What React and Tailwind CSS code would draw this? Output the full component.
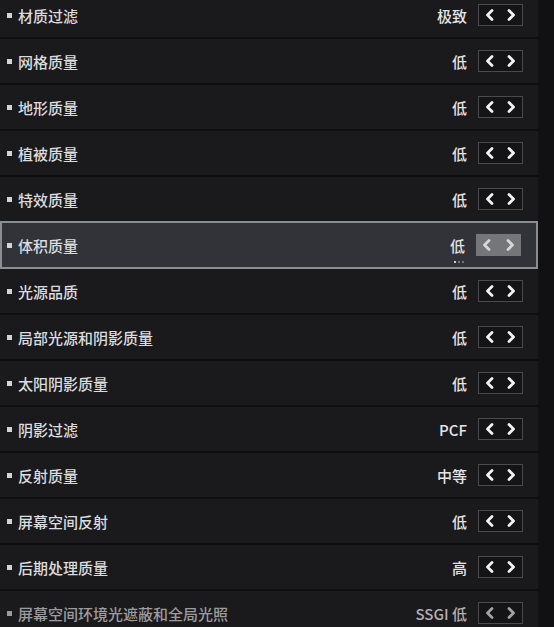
import React from 'react'

const rows = [
    { label: '材质过滤', value: '极致' },
    { label: '网格质量', value: '低' },
    { label: '地形质量', value: '低' },
    { label: '植被质量', value: '低' },
    { label: '特效质量', value: '低' },
    { label: '体积质量', value: '低', active: true },
    { label: '光源品质', value: '低' },
    { label: '局部光源和阴影质量', value: '低' },
    { label: '太阳阴影质量', value: '低' },
    { label: '阴影过滤', value: 'PCF' },
    { label: '反射质量', value: '中等' },
    { label: '屏幕空间反射', value: '低' },
    { label: '后期处理质量', value: '高' },
    { label: '屏幕空间环境光遮蔽和全局光照', value: 'SSGI 低', dim: true },
]

function Chevron({ dir, color }) {
    return (
        <svg width="10" height="12" viewBox="0 0 10 12" fill="none">
            <polyline
                points={dir === 'left' ? '7,1.5 2.5,6 7,10.5' : '3,1.5 7.5,6 3,10.5'}
                stroke={color}
                strokeWidth="2.8"
                strokeLinecap="round"
                strokeLinejoin="round"
            />
        </svg>
    )
}

function Stepper({ active, dim }) {
    const color = active ? '#d6d7da' : dim ? '#a3a3a5' : '#f2f2f2'
    return (
        <div className={`flex h-[22px] w-[45px] items-center justify-between px-[6px] ${active ? 'bg-[#75767a]' : 'border border-[#4a4a4d] bg-[#141417]'}`}>
            <Chevron dir="left" color={color} />
            <Chevron dir="right" color={color} />
        </div>
    )
}

function Row({ label, value, active, dim }) {
    return (
        <div className={`flex shrink-0 items-center pr-[15px] ${active ? '-my-[2px] h-[48px] border-2 border-[#8c8d90] bg-[#323338] pl-[5px]' : 'h-[44px] bg-[#1a1a1d] pl-[7px]'}`}>
            <span className={`mr-[6px] h-[5px] w-[5px] ${dim ? 'bg-[#9a9a9c]' : 'bg-[#d4d4d6]'}`}></span>
            <span className={`text-[15px] font-medium leading-none ${dim ? 'text-[#9c9c9e]' : 'text-[#dcdcde]'}`}>{label}</span>
            <div className="ml-auto flex items-center">
                <div className="relative mr-[11px]">
                    <span className={`text-[15px] font-medium leading-none ${dim ? 'text-[#b0b0b2]' : 'text-[#e4e4e6]'}`}>{value}</span>
                    {active && (
                        <div className="absolute -bottom-[6px] right-[1px] flex gap-[2px]">
                            <span className="h-[2px] w-[2px] rounded-full bg-white"></span>
                            <span className="h-[2px] w-[2px] rounded-full bg-[#8a8a8c]"></span>
                            <span className="h-[2px] w-[2px] rounded-full bg-[#8a8a8c]"></span>
                        </div>
                    )}
                </div>
                <Stepper active={active} dim={dim} />
            </div>
        </div>
    )
}

export default function App() {
    return (
        <div
            className="flex h-[627px] w-[554px] overflow-hidden bg-[#0f0f11]"
            style={{ fontFamily: '"Noto Sans CJK SC", "Noto Sans", sans-serif' }}
        >
            <div className="-mt-[7px] flex w-[538px] flex-col gap-[2px] bg-[#0d0d0f]">
                {rows.map((r, i) => (
                    <Row key={i} {...r} />
                ))}
            </div>
            <div className="flex-1 bg-[#111113]"></div>
        </div>
    )
}
